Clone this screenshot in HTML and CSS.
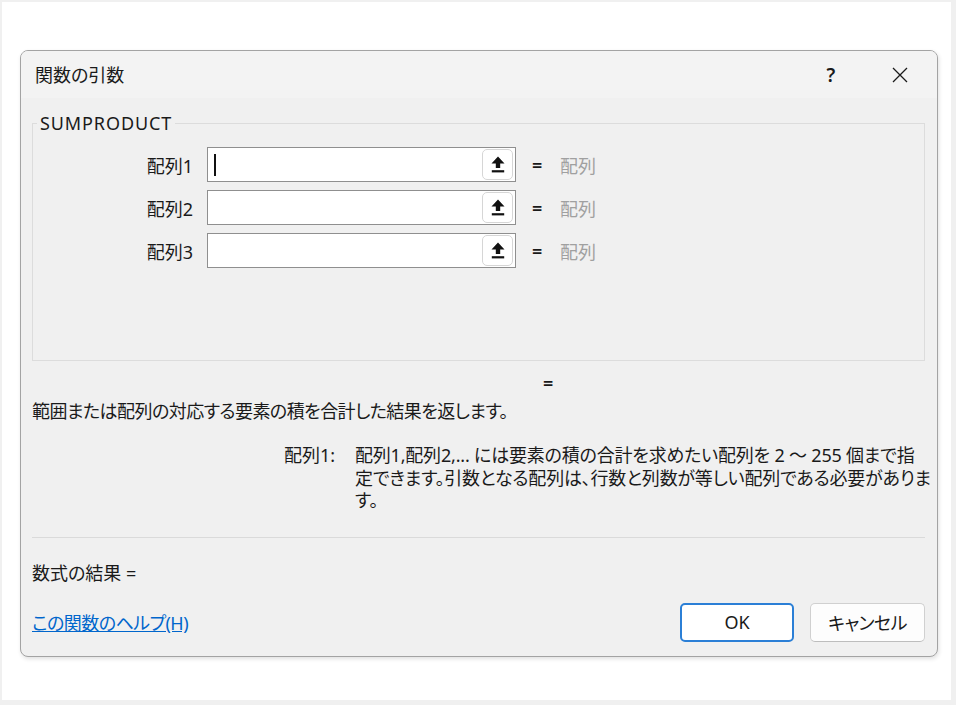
FILE: index.html
```html
<!DOCTYPE html>
<html lang="ja">
<head>
<meta charset="utf-8">
<title>関数の引数</title>
<link rel="stylesheet" href="styles.css">
</head>
<body>
<div class="frame">
  <div class="dialog">
    <div class="titlebar">
      <span class="title">関数の引数</span>
      <span class="help">?</span>
      <span class="close">
        <svg width="16" height="16" viewBox="0 0 16 16"><path d="M1 1 L15 15 M15 1 L1 15" stroke="#1a1a1a" stroke-width="1.3" fill="none"/></svg>
      </span>
    </div>
    <div class="body">
      <div class="group">
        <span class="legend">SUMPRODUCT</span>
        <div class="rows">
          <div class="row">
            <span class="label">配列1</span>
            <div class="input"><span class="caret"></span><span class="ref"><svg width="14" height="17" viewBox="0 0 14 17"><path d="M7 0.5 L13.5 7.5 H9.2 V12 H4.8 V7.5 H0.5 Z" fill="#111"/><rect x="0.8" y="14.2" width="12.4" height="2.2" fill="#111"/></svg></span></div>
            <span class="eq">=</span>
            <span class="val">配列</span>
          </div>
          <div class="row">
            <span class="label">配列2</span>
            <div class="input"><span class="ref"><svg width="14" height="17" viewBox="0 0 14 17"><path d="M7 0.5 L13.5 7.5 H9.2 V12 H4.8 V7.5 H0.5 Z" fill="#111"/><rect x="0.8" y="14.2" width="12.4" height="2.2" fill="#111"/></svg></span></div>
            <span class="eq">=</span>
            <span class="val">配列</span>
          </div>
          <div class="row">
            <span class="label">配列3</span>
            <div class="input"><span class="ref"><svg width="14" height="17" viewBox="0 0 14 17"><path d="M7 0.5 L13.5 7.5 H9.2 V12 H4.8 V7.5 H0.5 Z" fill="#111"/><rect x="0.8" y="14.2" width="12.4" height="2.2" fill="#111"/></svg></span></div>
            <span class="eq">=</span>
            <span class="val">配列</span>
          </div>
        </div>
      </div>
      <div class="result-eq"><span class="eq">=</span></div>
      <p class="desc">範囲または配列の対応する要素の積を合計した結果を返します。</p>
      <div class="argdesc">
        <span class="argname">配列1:</span>
        <p class="argtext">配列1,配列2,... には要素の積の合計を求めたい配列を 2 ～ 255 個まで指<br>定できます。引数となる配列は、行数と列数が等しい配列である必要がありま<br>す。</p>
      </div>
      <div class="sep"></div>
      <div class="formula">数式の結果 =</div>
      <div class="footer">
        <a class="helplink" href="#">この関数のヘルプ(H)</a>
        <div class="buttons">
          <button class="btn ok">OK</button>
          <button class="btn cancel">キャンセル</button>
        </div>
      </div>
    </div>
  </div>
</div>
</body>
</html>
```
FILE: styles.css
```css
* { box-sizing: border-box; margin: 0; padding: 0; }
html, body { width: 956px; height: 705px; overflow: hidden; }
body {
  background: #f0f0f0;
  font-family: "Noto Sans", "Noto Sans CJK JP", sans-serif;
  font-feature-settings: "palt";
  font-size: 18px;
  color: #1a1a1a;
}
.frame {
  margin: 2px 0 0 2px;
  width: 949px;
  height: 698px;
  background: #fff;
  padding: 48px 0 0 18px;
}
.dialog {
  width: 918px;
  height: 607px;
  border: 1px solid #a3a3a3;
  border-radius: 8px;
  background: #f0f0f0;
  box-shadow: 1px 2px 4px rgba(0,0,0,0.12);
  display: flex;
  flex-direction: column;
  overflow: hidden;
}
.titlebar {
  height: 47px;
  flex: none;
  background: #f3f3f3;
  display: flex;
  align-items: center;
  padding-left: 14px;
}
.title { flex: 1; line-height: 22px; }
.help {
  width: 40px;
  text-align: center;
  font-weight: 600;
  font-size: 19px;
}
.close {
  width: 40px;
  margin-left: 29px;
  margin-right: 17px;
  display: flex;
  justify-content: center;
}
.body {
  flex: 1;
  display: flex;
  flex-direction: column;
  padding: 0 12px 14px 11px;
}
.group {
  position: relative;
  margin-top: 25px;
  height: 238px;
  border: 1px solid #dcdcdc;
  padding-top: 23px;
}
.legend {
  position: absolute;
  top: -12px;
  left: 4px;
  padding: 0 3px;
  background: #f0f0f0;
  line-height: 22px;
  letter-spacing: 0.9px;
}
.rows { display: flex; flex-direction: column; gap: 8px; }
.row { display: flex; align-items: center; height: 35px; }
.label { width: 160px; text-align: right; }
.input {
  margin-left: 14px;
  width: 309px;
  height: 35px;
  border: 1px solid #8f8f8f;
  background: #fff;
  display: flex;
  align-items: center;
  padding: 0 2px 0 6px;
}
.caret { width: 2px; height: 22px; background: #111; }
.ref {
  margin-left: auto;
  width: 31px;
  height: 31px;
  border: 1px solid #d6d6d6;
  border-radius: 5px;
  background: #fff;
  display: flex;
  align-items: center;
  justify-content: center;
}
.eq { margin-left: 16px; width: 13px; font-weight: 600; }
.val { margin-left: 15px; color: #a0a0a0; }
.result-eq { margin-top: 11px; padding-left: 495px; line-height: 22px; }
.desc { margin-top: 6px; line-height: 22px; letter-spacing: -0.55px; }
.argdesc {
  margin-top: 22px;
  display: flex;
  padding-left: 252px;
  line-height: 22.5px;
}
.argname { width: 71px; flex: none; }
.argtext { white-space: nowrap; letter-spacing: -0.2px; }
.sep { margin-top: 25px; height: 1px; background: #dadada; }
.formula { margin-top: 24px; line-height: 22px; }
.footer {
  margin-top: 19px;
  display: flex;
  align-items: center;
  justify-content: space-between;
}
.helplink { color: #0066cc; text-decoration: underline; letter-spacing: -0.55px; }
.buttons { display: flex; gap: 16px; }
.btn {
  width: 115px;
  height: 39px;
  font: inherit;
  color: #1a1a1a;
  background: #fdfdfd;
  border: 1px solid #d0d0d0;
  border-bottom-color: #bdbdbd;
  border-radius: 5px;
}
.btn.cancel { letter-spacing: -0.6px; }
.btn.ok {
  width: 114px;
  border: 2px solid #2b7fd6;
  background: #fff;
}
```
